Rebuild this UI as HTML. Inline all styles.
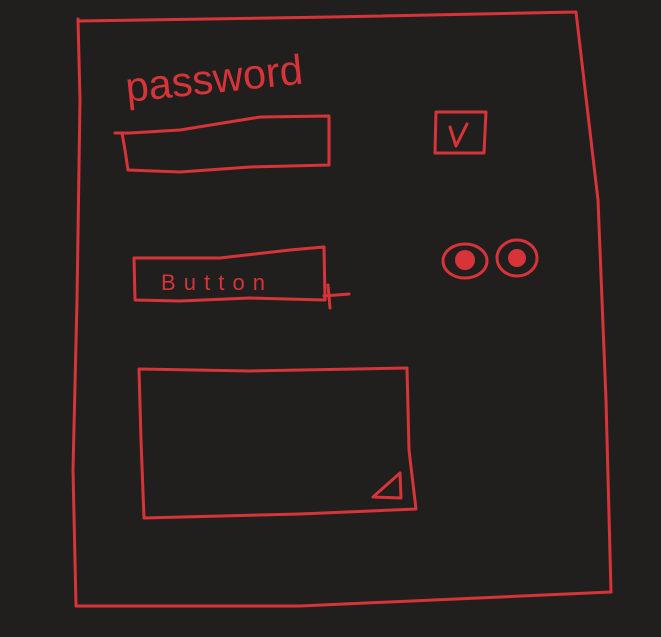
<!DOCTYPE html>
<html><head><style>
html,body{margin:0;padding:0;background:#201f1e;width:661px;height:637px;overflow:hidden}
svg{display:block}
</style></head><body>
<svg width="661" height="637" viewBox="0 0 661 637" xmlns="http://www.w3.org/2000/svg">
<g fill="none" stroke="#d7343a" stroke-width="3" stroke-linecap="round" stroke-linejoin="round">
<path d="M78 19 L80 100 L77 300 L73 470 L76 606 L300 606 L611 592 L606 400 L598 200 L576 12 L330 17 L78 21"/>
<path d="M115 133 L130 133 L180 130 L260 117 L329 116 L329 165 L250 167 L180 172 L128 170 L125 150 L122 133"/>
<path d="M436 112 L486 112 L484 153 L435 153 Z"/>
<path d="M450 127 L456 146 L467 124"/>
<path d="M134 258 L220 258 L290 250 L324 247 L325 300 L250 298 L180 301 L135 300 Z"/>
<path d="M324 296 L349 294 M328 285 L330 308"/>
<ellipse cx="465" cy="261" rx="22" ry="17"/>
<ellipse cx="517" cy="258" rx="20" ry="18"/>
<path d="M139 369 L250 371 L407 368 L409 450 L416 509 L300 514 L144 518 L141 440 Z"/>
<path d="M373 497 L400 473 L401 498 Z"/>
</g>
<circle cx="465" cy="260" r="10" fill="#d7343a"/>
<circle cx="517" cy="258" r="9" fill="#d7343a"/>
<text x="127" y="102" fill="#d7343a" font-family="Liberation Sans, sans-serif" font-size="42" transform="rotate(-6 127 102)" textLength="178" lengthAdjust="spacingAndGlyphs">password</text>
<text x="161" y="290" fill="#d7343a" font-family="Liberation Sans, sans-serif" font-size="22" textLength="104">Button</text>
</svg>
</body></html>
